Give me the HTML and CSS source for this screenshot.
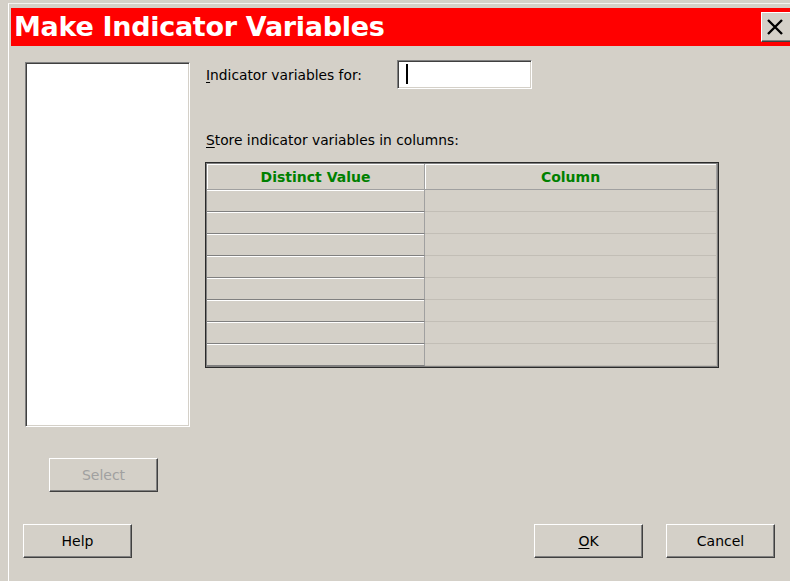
FILE: index.html
```html
<!DOCTYPE html>
<html lang="en">
<head>
<meta charset="utf-8">
<title>Make Indicator Variables</title>
<link rel="stylesheet" href="styles.css">
</head>
<body>
<div class="dialog">
  <div class="titlebar">
    <span class="title">Make Indicator Variables</span>
    <button class="close" aria-label="Close">
      <svg width="18" height="16" viewBox="0 0 18 16"><path d="M2 1 L16 15 M16 1 L2 15" stroke="#000" stroke-width="2.4" fill="none"/></svg>
    </button>
  </div>

  <div class="content">
    <div class="left">
      <div class="listbox sunken"></div>
      <button class="btn select" disabled>Select</button>
    </div>

    <div class="right">
      <div class="field-row">
        <label class="field-label"><u>I</u>ndicator variables for:</label>
        <div class="input sunken"><span class="caret"></span></div>
      </div>
      <div class="store-label"><u>S</u>tore indicator variables in columns:</div>
      <div class="grid-frame">
        <div class="grid">
          <div class="hcell">Distinct Value</div>
          <div class="hcell">Column</div>
          <div class="rcell"></div><div class="dcell"></div>
          <div class="rcell"></div><div class="dcell"></div>
          <div class="rcell"></div><div class="dcell"></div>
          <div class="rcell"></div><div class="dcell"></div>
          <div class="rcell"></div><div class="dcell"></div>
          <div class="rcell"></div><div class="dcell"></div>
          <div class="rcell"></div><div class="dcell"></div>
          <div class="rcell"></div><div class="dcell"></div>
        </div>
      </div>
    </div>
  </div>

  <div class="footer">
    <button class="btn">Help</button>
    <div class="actions">
      <button class="btn"><u>O</u>K</button>
      <button class="btn">Cancel</button>
    </div>
  </div>
</div>
</body>
</html>
```
FILE: styles.css
```css
html, body {
  margin: 0;
  padding: 0;
}

body {
  width: 790px;
  height: 581px;
  overflow: hidden;
  background: #d4d0c8;
  font-family: "DejaVu Sans", sans-serif;
  font-size: 13.8px;
  color: #000;
}

u {
  text-decoration: underline;
  text-underline-offset: 2px;
}

.dialog {
  margin: 3px 0 0 8px;
  border-top: 1px solid #f4f2ee;
  border-left: 1px solid #ffffff;
  padding: 4px 0 0 2px;
  height: 573px;
}

/* red caption bar */
.titlebar {
  height: 38px;
  background: #ff0000;
  display: flex;
  align-items: center;
  justify-content: space-between;
}

.title {
  color: #fff;
  font-weight: bold;
  font-size: 27px;
  letter-spacing: -0.3px;
  padding-left: 3px;
  line-height: 38px;
}

.close {
  width: 32px;
  height: 30px;
  margin-right: -3px;
  padding: 0 0 0 4px;
  background: #d4d0c8;
  border: 1px solid;
  border-color: #ffffff #404040 #404040 #ffffff;
  box-shadow: inset -1px -1px #808080;
  display: flex;
  align-items: center;
}

.content {
  display: flex;
  padding-left: 14px;
}

.left {
  display: flex;
  flex-direction: column;
  width: 165px;
}

.sunken {
  background: #fff;
  border: 1px solid;
  border-color: #808080 #ffffff #ffffff #808080;
  box-shadow: inset 1px 1px #404040, inset -1px -1px #d4d0c8;
  box-sizing: border-box;
}

.listbox {
  margin-top: 16px;
  width: 165px;
  height: 365px;
}

.btn {
  width: 109px;
  height: 34px;
  padding: 0;
  background: #d4d0c8;
  border: 1px solid;
  border-color: #ffffff #404040 #404040 #ffffff;
  box-shadow: inset -1px -1px #808080;
  font-family: "DejaVu Sans", sans-serif;
  font-size: 14px;
  color: #000;
  box-sizing: border-box;
}

.btn.select {
  margin: 31px 0 0 24px;
  color: #a0a0a0;
}

.right {
  margin-left: 16px;
  display: flex;
  flex-direction: column;
}

.field-row {
  margin-top: 14px;
  display: flex;
  align-items: center;
  height: 29px;
}

.field-label {
  width: 191px;
  line-height: 16px;
}

.input {
  width: 135px;
  height: 29px;
  position: relative;
}

.caret {
  position: absolute;
  left: 8px;
  top: 3px;
  width: 2px;
  height: 20px;
  background: #000;
}

.store-label {
  margin-top: 43px;
  line-height: 16px;
}

/* worksheet-style column grid */
.grid-frame {
  margin: 14px 0 0 -1px;
  width: 514px;
  border: 1px solid #2a2a2a;
  box-sizing: border-box;
}

.grid {
  border: 1px solid #808080;
  display: grid;
  grid-template-columns: 218px 1fr;
  grid-template-rows: 26px repeat(8, 22px);
}

.hcell {
  box-sizing: border-box;
  border-right: 1px solid #a0a0a0;
  border-bottom: 1px solid #a0a0a0;
  box-shadow: inset 1px 1px #ffffff;
  color: #008000;
  font-weight: bold;
  font-size: 14px;
  display: flex;
  align-items: center;
  justify-content: center;
}

.rcell {
  box-sizing: border-box;
  border-right: 1px solid #a0a0a0;
  border-bottom: 1px solid #808080;
  box-shadow: inset 0 1px #ffffff;
}

.dcell {
  box-sizing: border-box;
  border-right: 1px solid #c2beb6;
  border-bottom: 1px solid #c2beb6;
}

.footer {
  margin-top: 32px;
  display: flex;
  justify-content: space-between;
  padding: 0 15px 0 12px;
}

.actions {
  display: flex;
  gap: 23px;
}
```
